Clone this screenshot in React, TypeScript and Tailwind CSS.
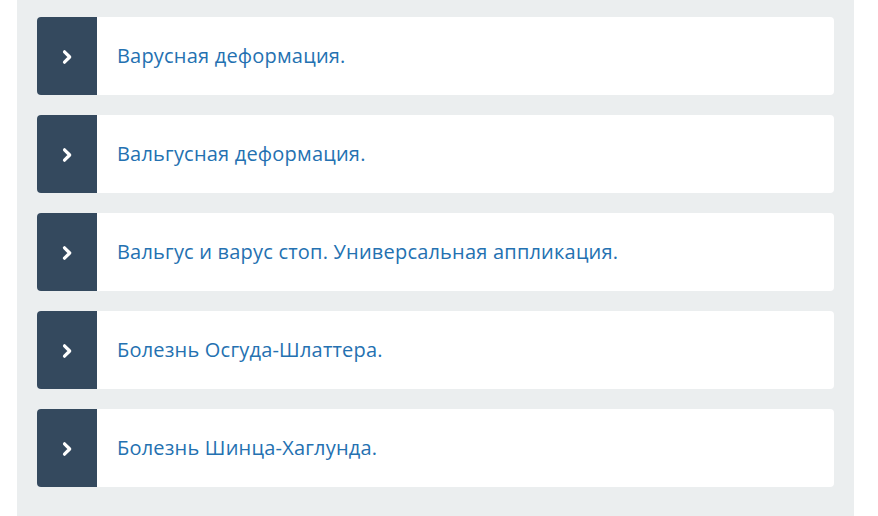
const items = [
  "Варусная деформация.",
  "Вальгусная деформация.",
  "Вальгус и варус стоп. Универсальная аппликация.",
  "Болезнь Осгуда-Шлаттера.",
  "Болезнь Шинца-Хаглунда.",
];

const Chevron = () => (
  <svg width="12" height="16" viewBox="0 0 12 16" fill="none">
    <path
      d="M3.5 2.8 L8.7 8 L3.5 13.2"
      stroke="white"
      strokeWidth="3.2"
      strokeLinecap="round"
      strokeLinejoin="round"
    />
  </svg>
);

export default function App() {
  return (
    <div className="w-[878px] h-[516px] bg-white" style={{ fontFamily: "'Open Sans', sans-serif" }}>
      <div className="ml-[17px] w-[837px] h-[516px] bg-[#ebeeef] px-5 pt-[17px] flex flex-col gap-5">
        {items.map((t) => (
          <a
            key={t}
            href="#"
            className="flex h-[78px] bg-white rounded-[4px] overflow-hidden"
          >
            <div className="w-[60px] shrink-0 bg-[#34495e] flex items-center justify-center pt-[2px]">
              <Chevron />
            </div>
            <div className="flex items-center pl-5 text-[20px] tracking-[0.2px] text-[#2471b1]">
              {t}
            </div>
          </a>
        ))}
      </div>
    </div>
  );
}
